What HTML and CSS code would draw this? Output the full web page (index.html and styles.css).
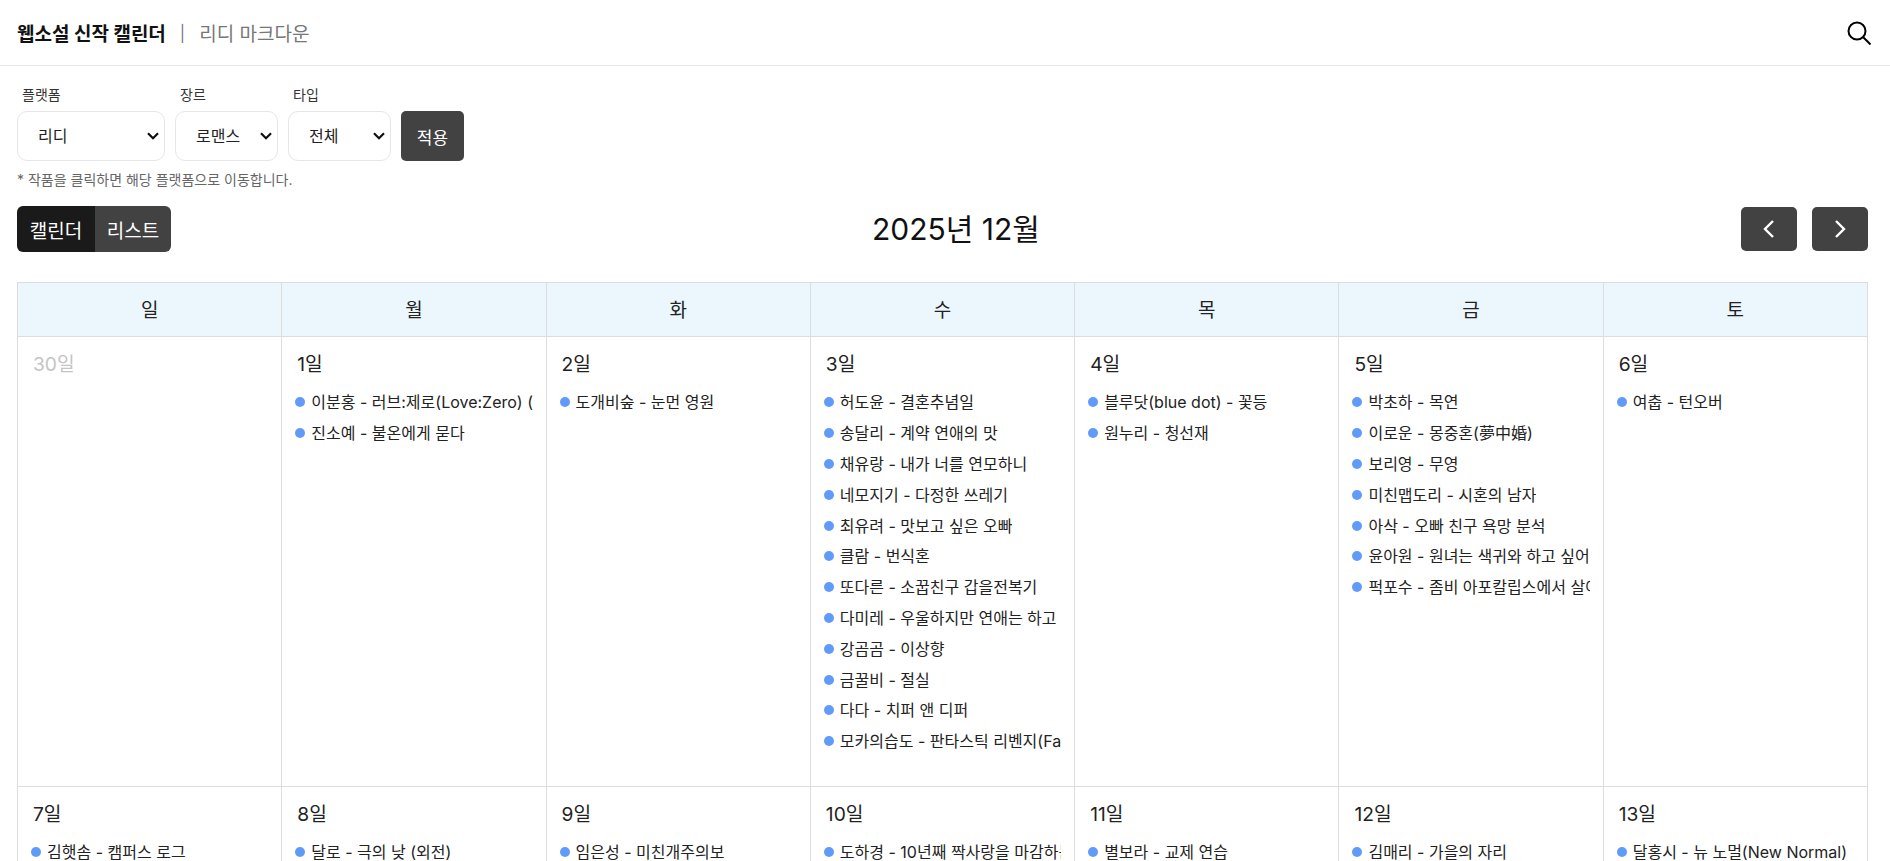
FILE: index.html
```html
<!DOCTYPE html>
<html lang="ko">
<head>
    <meta charset="UTF-8">
    <meta name="viewport" content="width=device-width, initial-scale=1.0">
    <title>웹소설 신작 캘린더</title>
    <link rel="stylesheet" href="styles.css">
</head>
<body>
    <header class="topbar">
        <div class="brand">
            <span class="brand-title">웹소설 신작 캘린더</span>
            <span class="brand-sep">|</span>
            <span class="brand-sub">리디 마크다운</span>
        </div>
        <button class="search-btn" aria-label="검색">
            <svg width="24" height="24" viewBox="0 0 24 24" fill="none" stroke="#000" stroke-width="2">
                <circle cx="10" cy="10" r="8.5"/>
                <path d="M16 16l7.5 7.5"/>
            </svg>
        </button>
    </header>

    <main class="content">
        <form class="filters">
            <div class="field">
                <label class="field-label">플랫폼</label>
                <select class="select select-platform"><option>리디</option></select>
            </div>
            <div class="field">
                <label class="field-label">장르</label>
                <select class="select select-small"><option>로맨스</option></select>
            </div>
            <div class="field">
                <label class="field-label">타입</label>
                <select class="select select-small"><option>전체</option></select>
            </div>
            <button type="button" class="apply-btn">적용</button>
        </form>
        <p class="note">* 작품을 클릭하면 해당 플랫폼으로 이동합니다.</p>

        <div class="toolbar">
            <div class="view-toggle">
                <button class="toggle-btn active">캘린더</button>
                <button class="toggle-btn">리스트</button>
            </div>
            <h2 class="month-title">2025년 12월</h2>
            <div class="month-nav">
                <button class="nav-btn" aria-label="이전 달">
                    <svg width="12" height="20" viewBox="0 0 12 20" fill="none" stroke="#fff" stroke-width="2.4"><path d="M10 2l-8 8 8 8"/></svg>
                </button>
                <button class="nav-btn" aria-label="다음 달">
                    <svg width="12" height="20" viewBox="0 0 12 20" fill="none" stroke="#fff" stroke-width="2.4"><path d="M2 2l8 8-8 8"/></svg>
                </button>
            </div>
        </div>

        <table class="calendar">
            <thead>
                <tr>
                    <th>일</th><th>월</th><th>화</th><th>수</th><th>목</th><th>금</th><th>토</th>
                </tr>
            </thead>
            <tbody>
                <tr class="week-first">
                    <td><div class="day muted">30일</div></td>
                    <td>
                        <div class="day">1일</div>
                        <ul class="items">
                            <li><span>이분홍 - 러브:제로(Love:Zero) (외전)</span></li>
                            <li><span>진소예 - 불온에게 묻다</span></li>
                        </ul>
                    </td>
                    <td>
                        <div class="day">2일</div>
                        <ul class="items">
                            <li><span>도개비숲 - 눈먼 영원</span></li>
                        </ul>
                    </td>
                    <td>
                        <div class="day">3일</div>
                        <ul class="items">
                            <li><span>허도윤 - 결혼추념일</span></li>
                            <li><span>송달리 - 계약 연애의 맛</span></li>
                            <li><span>채유랑 - 내가 너를 연모하니</span></li>
                            <li><span>네모지기 - 다정한 쓰레기</span></li>
                            <li><span>최유려 - 맛보고 싶은 오빠</span></li>
                            <li><span>클람 - 번식혼</span></li>
                            <li><span>또다른 - 소꿉친구 갑을전복기</span></li>
                            <li><span>다미레 - 우울하지만 연애는 하고 싶어</span></li>
                            <li><span>강곰곰 - 이상향</span></li>
                            <li><span>금꿀비 - 절실</span></li>
                            <li><span>다다 - 치퍼 앤 디퍼</span></li>
                            <li><span>모카의습도 - 판타스틱 리벤지(Fantastic Revenge)</span></li>
                        </ul>
                    </td>
                    <td>
                        <div class="day">4일</div>
                        <ul class="items">
                            <li><span>블루닷(blue dot) - 꽃등</span></li>
                            <li><span>원누리 - 청선재</span></li>
                        </ul>
                    </td>
                    <td>
                        <div class="day">5일</div>
                        <ul class="items">
                            <li><span>박초하 - 목연</span></li>
                            <li><span>이로운 - 몽중혼(夢中婚)</span></li>
                            <li><span>보리영 - 무영</span></li>
                            <li><span>미친맵도리 - 시혼의 남자</span></li>
                            <li><span>아삭 - 오빠 친구 욕망 분석</span></li>
                            <li><span>윤아원 - 원녀는 색귀와 하고 싶어서</span></li>
                            <li><span>퍽포수 - 좀비 아포칼립스에서 살아남기</span></li>
                        </ul>
                    </td>
                    <td>
                        <div class="day">6일</div>
                        <ul class="items">
                            <li><span>여춥 - 턴오버</span></li>
                        </ul>
                    </td>
                </tr>
                <tr>
                    <td><div class="day">7일</div><ul class="items"><li><span>김햇솜 - 캠퍼스 로그</span></li></ul></td>
                    <td><div class="day">8일</div><ul class="items"><li><span>달로 - 극의 낮 (외전)</span></li></ul></td>
                    <td><div class="day">9일</div><ul class="items"><li><span>임은성 - 미친개주의보</span></li></ul></td>
                    <td><div class="day">10일</div><ul class="items"><li><span>도하경 - 10년째 짝사랑을 마감하는 법</span></li></ul></td>
                    <td><div class="day">11일</div><ul class="items"><li><span>별보라 - 교제 연습</span></li></ul></td>
                    <td><div class="day">12일</div><ul class="items"><li><span>김매리 - 가을의 자리</span></li></ul></td>
                    <td><div class="day">13일</div><ul class="items"><li><span>달홍시 - 뉴 노멀(New Normal)</span></li></ul></td>
                </tr>
            </tbody>
        </table>
    </main>
</body>
</html>
```

FILE: styles.css
```css
html, body {
    height: 100%;
    overflow: hidden;
}
body {
    margin: 0;
    font-family: Inter, "Noto Sans CJK KR", sans-serif;
    color: #1a1a1a;
    background-color: #fff;
}
button, select {
    font-family: inherit;
}
.topbar {
    display: flex;
    justify-content: space-between;
    align-items: center;
    height: 65px;
    padding: 0 19px 0 17px;
    border-bottom: 1px solid #e5e5e5;
}
.brand {
    display: flex;
    align-items: center;
    font-size: 19px;
}
.brand-title {
    font-weight: 700;
    color: #111;
}
.brand-sep {
    margin: 0 14px;
    font-size: 16px;
    color: #777;
}
.brand-sub {
    color: #777;
}
.search-btn {
    display: flex;
    padding: 0;
    background: none;
    border: none;
    cursor: pointer;
}
.content {
    padding: 19px 22px 0 17px;
}
.filters {
    display: flex;
    align-items: flex-end;
    gap: 10px;
}
.field {
    display: flex;
    flex-direction: column;
}
.field-label {
    margin-bottom: 6px;
    padding-left: 5px;
    font-size: 14px;
    line-height: 20px;
    color: #333;
}
.select {
    height: 50px;
    padding: 0 20px;
    font-size: 16px;
    color: #222;
    appearance: none;
    background: #fff url("data:image/svg+xml,%3Csvg xmlns='http://www.w3.org/2000/svg' width='12' height='8' viewBox='0 0 12 8' fill='none' stroke='%23111' stroke-width='2.2'%3E%3Cpath d='M1 1.2l5 5 5-5'/%3E%3C/svg%3E") no-repeat right 5px center;
    border: 1px solid #e6e6ea;
    border-radius: 10px;
}
.select-platform {
    width: 148px;
}
.select-small {
    width: 103px;
}
.apply-btn {
    width: 63px;
    height: 50px;
    font-size: 17px;
    color: #fff;
    background-color: #424242;
    border: none;
    border-radius: 5px;
    cursor: pointer;
}
.note {
    margin: 9px 0 0;
    font-size: 14px;
    line-height: 20px;
    color: #666;
}
.toolbar {
    display: flex;
    justify-content: space-between;
    align-items: center;
    height: 46px;
    margin-top: 16px;
}
.view-toggle {
    display: flex;
    width: 154px;
    height: 46px;
    overflow: hidden;
    border-radius: 6px;
}
.toggle-btn {
    flex: 1;
    padding: 0;
    font-size: 19px;
    color: #fff;
    background-color: #424242;
    border: none;
    cursor: pointer;
}
.toggle-btn.active {
    flex: 0 0 78px;
    background-color: #1a1a1a;
}
.month-title {
    margin: 0 0 4px;
    font-size: 30px;
    font-weight: 400;
    color: #111;
}
.month-nav {
    display: flex;
    gap: 15px;
}
.nav-btn {
    display: flex;
    justify-content: center;
    align-items: center;
    width: 56px;
    height: 44px;
    background-color: #424242;
    border: none;
    border-radius: 5px;
    cursor: pointer;
}
.calendar {
    width: 100%;
    margin-top: 30px;
    table-layout: fixed;
    border-collapse: collapse;
}
.calendar th {
    height: 51px;
    padding: 0 0 2px;
    font-size: 19px;
    font-weight: 400;
    color: #222;
    background-color: #ebf7fd;
    border: 1px solid #ddd;
}
.calendar td {
    padding: 0;
    vertical-align: top;
    border: 1px solid #ddd;
}
.week-first td {
    height: 449px;
}
.day {
    padding: 14px 15px 0;
    font-size: 19.2px;
    line-height: 26px;
    color: #222;
}
.day.muted {
    color: #c4c4c4;
}
.items {
    margin: 9px 13px 0;
    padding: 0;
    list-style: none;
}
.items li {
    display: flex;
    align-items: center;
    height: 30.8px;
    font-size: 16px;
    white-space: nowrap;
    color: #222;
}
.items li::before {
    content: "";
    flex: 0 0 10px;
    height: 10px;
    margin: 2px 6px 0 0;
    background-color: #619bf9;
    border-radius: 50%;
}
.items span {
    overflow: hidden;
}
```
